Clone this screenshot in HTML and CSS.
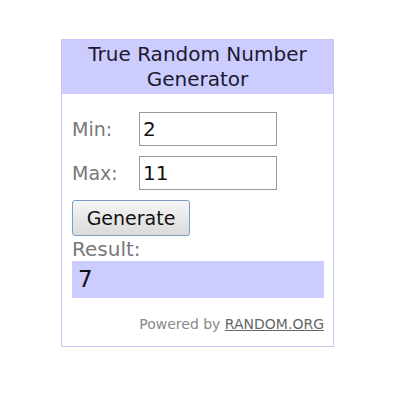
FILE: index.html
```html
<!DOCTYPE html>
<html lang="en">
<head>
    <meta charset="UTF-8">
    <title>True Random Number Generator</title>
    <link rel="stylesheet" href="styles.css">
</head>
<body>
    <div class="widget">
        <div class="widget-title">True Random Number<br>Generator</div>
        <div class="widget-body">
            <div class="field">
                <label for="min">Min:</label>
                <input type="text" id="min" value="2">
            </div>
            <div class="field field-max">
                <label for="max">Max:</label>
                <input type="text" id="max" value="11">
            </div>
            <button type="button" class="generate">Generate</button>
            <div class="result-label">Result:</div>
            <div class="result">7</div>
            <div class="powered">Powered by <a href="#">RANDOM.ORG</a></div>
        </div>
    </div>
</body>
</html>
```

FILE: styles.css
```css
body {
    margin: 0;
    padding: 0;
    background: white;
    font-family: "DejaVu Sans", Verdana, sans-serif;
}
.widget {
    width: 271px;
    margin-top: 39px;
    margin-left: 61px;
    border: 1px solid #c8c8f4;
}
.widget-title {
    background-color: #ccccff;
    color: #1c1a30;
    text-align: center;
    font-size: 20px;
    line-height: 25px;
    padding: 2px 0 3px;
    height: 49px;
}
.widget-body {
    padding: 18px 9px 14px 10px;
}
.field {
    display: flex;
    align-items: center;
}
.field-max {
    margin-top: 10px;
}
label {
    width: 67px;
    color: #787878;
    font-size: 19px;
}
input {
    box-sizing: border-box;
    width: 138px;
    height: 34px;
    border: 1px solid #999;
    padding: 2px 3px;
    font-family: "DejaVu Sans", Verdana, sans-serif;
    font-size: 20px;
    color: #111;
}
.generate {
    margin-top: 10px;
    width: 118px;
    height: 36px;
    border: 1px solid #7a9cc8;
    border-radius: 3px;
    background: linear-gradient(#f6f6f6, #dadada);
    font-family: "DejaVu Sans", Verdana, sans-serif;
    font-size: 19px;
    color: #111;
    padding: 0;
}
.result-label {
    color: #787878;
    font-size: 20px;
    line-height: 23px;
    margin-top: 2px;
}
.result {
    background-color: #ccccff;
    height: 37px;
    line-height: 37px;
    padding-left: 6px;
    font-size: 23px;
    color: #111;
}
.powered {
    text-align: right;
    margin-top: 18px;
    font-size: 14px;
    color: #888;
}
.powered a {
    color: #666;
}
```
